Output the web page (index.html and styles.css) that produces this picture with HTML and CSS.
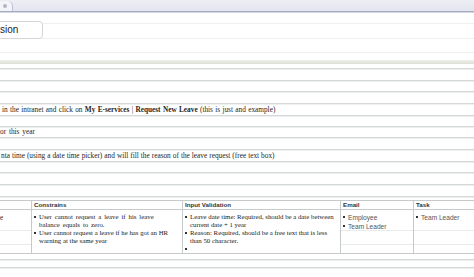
FILE: index.html
```html
<!DOCTYPE html>
<html>
<head>
<meta charset="utf-8">
<link rel="stylesheet" href="styles.css">
</head>
<body>
<div class="page">
  <div class="tabbar">
    <div class="tab"><span class="tab-close"></span></div>
  </div>
  <div class="header">
    <div class="field">sion</div>
  </div>
  <div class="band"></div>
  <div class="ruled">
    <div class="line h4"></div>
    <div class="line h11"></div>
    <div class="line h10"></div>
    <div class="line h11"></div>
    <div class="line h11"><p class="doc ws-a">in the intranet and click on <b>My E-services</b> | <b>Request New Leave</b> (this is just and example)</p></div>
    <div class="line h10"></div>
    <div class="line h10"><p class="doc ws-b">or this year</p></div>
    <div class="line h11"></div>
    <div class="line h11"><p class="doc ws-c">nta time (using a date time picker) and will fill the reason of the leave request (free text box)</p></div>
    <div class="line h10"></div>
    <div class="line h11"></div>
    <div class="line h11"></div>
  </div>
  <div class="table-wrap">
    <table class="spec">
      <colgroup>
        <col class="c-first">
        <col class="c-cons">
        <col class="c-input">
        <col class="c-email">
        <col class="c-task">
      </colgroup>
      <thead>
        <tr>
          <th></th>
          <th>Constrains</th>
          <th>Input Validation</th>
          <th>Email</th>
          <th>Task</th>
        </tr>
      </thead>
      <tbody>
        <tr>
          <td class="first faint">e</td>
          <td class="serif">
            <ul class="bullets">
              <li class="wide">User cannot request a leave if his leave<br>balance equals to zero.</li>
              <li>User cannot request a leave if he has got an HR<br>warning at the same year</li>
            </ul>
          </td>
          <td class="serif">
            <ul class="bullets">
              <li>Leave date time: Required, should be a date between<br>current date + 1 year</li>
              <li>Reason: Required, should be a free text that is less<br>than 50 character.</li>
              <li>&nbsp;</li>
            </ul>
          </td>
          <td class="sans faint">
            <ul class="bullets">
              <li>Employee</li>
              <li>Team Leader</li>
            </ul>
          </td>
          <td class="sans faint">
            <ul class="bullets">
              <li>Team Leader</li>
            </ul>
          </td>
        </tr>
      </tbody>
    </table>
  </div>
  <div class="line h5"></div>
  <div class="line h7"></div>
</div>
</body>
</html>
```
FILE: styles.css
```css
html, body {
  margin: 0;
  padding: 0;
  background: #ffffff;
}

.page {
  width: 474px;
  height: 277px;
  overflow: hidden;
  background: #ffffff;
}

/* top tab strip */
.tabbar {
  height: 11px;
  background: linear-gradient(#eceef4, #e3e6ef);
  border-bottom: 1px solid #a7acc3;
  box-shadow: 0 1px 0 #d3d7e6;
  display: flex;
  align-items: flex-end;
}

.tab {
  width: 13px;
  height: 10px;
  background: #f3f4f8;
  border-right: 1px solid #babecd;
  border-top-right-radius: 5px;
  display: flex;
  align-items: center;
  padding-left: 3px;
  box-sizing: border-box;
}

.tab-close {
  width: 4px;
  height: 4px;
  border-radius: 50%;
  background: #b3b6c2;
}

/* header zone with faint rules */
.header {
  height: 48px;
  padding-top: 9px;
  box-sizing: border-box;
  background-image:
    linear-gradient(to bottom,
      transparent 11px, #eef0f0 11px, #eef0f0 12px, transparent 12px,
      transparent 26px, #eef0f0 26px, #eef0f0 27px, transparent 27px,
      transparent 40px, #eef0f0 40px, #eef0f0 41px, transparent 41px);
}

.field {
  margin-left: -8px;
  width: 51px;
  height: 18px;
  box-sizing: border-box;
  border: 1px solid #d4d6d6;
  border-radius: 4px;
  background: #ffffff;
  padding-left: 7px;
  font-family: "Liberation Sans", Arial, sans-serif;
  font-size: 10px;
  line-height: 16px;
  color: #222222;
  white-space: nowrap;
}

.band {
  height: 4px;
  background: linear-gradient(#eff1ec, #dcdfd7);
}

/* ruled document lines */
.line {
  border-bottom: 1px solid #d4d8d8;
  box-shadow: 0 1px 0 #eef0f0;
}

.h4 { height: 4px; }
.h5 { height: 5px; }
.h7 { height: 7px; }
.h10 { height: 10px; }
.h11 { height: 11px; }

.doc {
  margin: 0;
  padding-left: 2px;
  font-family: "Liberation Serif", "Times New Roman", serif;
  font-size: 7.3px;
  line-height: 11px;
  color: #262626;
  white-space: nowrap;
}

.h10 .doc { line-height: 10px; }

.ws-a { word-spacing: 0.5px; }
.ws-b { word-spacing: 1px; padding-left: 0; }
.ws-c { word-spacing: 0.2px; padding-left: 1px; }

/* table */
.table-wrap {
  width: 474px;
  overflow: hidden;
  padding-top: 3px;
}

.spec {
  margin-left: -40px;
  table-layout: fixed;
  border-collapse: separate;
  border-spacing: 0;
  width: 581px;
  border-top: 1px solid #c6caca;
}

.c-first { width: 72px; }
.c-cons { width: 151px; }
.c-input { width: 158px; }
.c-email { width: 73px; }
.c-task { width: 127px; }

.spec th,
.spec td {
  box-sizing: border-box;
  border-right: 1px solid #c6caca;
  border-bottom: 1px solid #c6caca;
  vertical-align: top;
  text-align: left;
}

.spec th {
  height: 9px;
  padding: 0 0 0 2px;
  font-family: "Liberation Sans", Arial, sans-serif;
  font-weight: bold;
  font-size: 6.2px;
  line-height: 8px;
  color: #333333;
  white-space: nowrap;
}

.spec td {
  height: 43px;
  padding: 2.5px 0 0 2px;
}

.spec td.first {
  padding: 4px 0 0 40px;
  font-family: "Liberation Serif", "Times New Roman", serif;
  font-size: 7.3px;
  line-height: 8px;
  color: #2a2a2a;
}

.faint {
  background-image:
    linear-gradient(to bottom,
      transparent 20px, #e9ecec 20px, #e9ecec 21px, transparent 21px,
      transparent 34px, #e9ecec 34px, #e9ecec 35px, transparent 35px);
}

.bullets {
  list-style: none;
  margin: 0;
  padding: 0;
}

.bullets li {
  position: relative;
  padding-left: 5px;
  white-space: nowrap;
}

.bullets li::before {
  content: "";
  position: absolute;
  left: 0;
  top: 3px;
  width: 2px;
  height: 2px;
  background: #333333;
}

.serif {
  font-family: "Liberation Serif", "Times New Roman", serif;
  font-size: 6.8px;
  line-height: 8px;
  color: #222222;
}

.serif .wide { word-spacing: 1.2px; }

.sans {
  font-family: "Liberation Sans", Arial, sans-serif;
  font-size: 6.6px;
  line-height: 9px;
  color: #555555;
}

.sans li::before { top: 3.5px; }
```
